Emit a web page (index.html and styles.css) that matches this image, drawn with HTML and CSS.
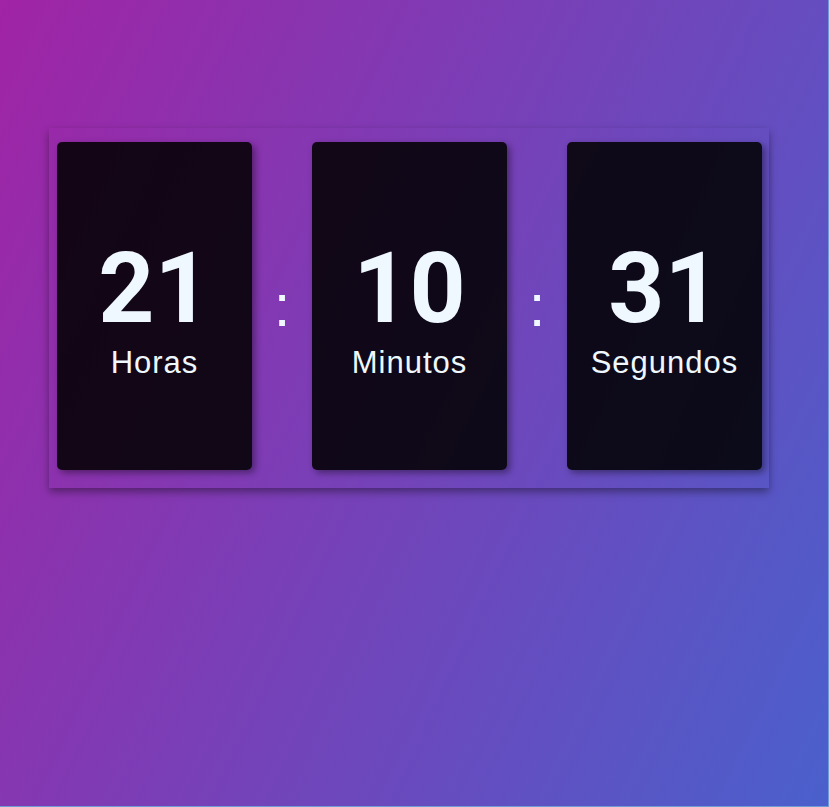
FILE: index.html
```html
<!DOCTYPE html>
<html lang="es">
<head>
<meta charset="utf-8">
<title>Reloj</title>
<link rel="stylesheet" href="styles.css">
</head>
<body>
  <div class="clock">
    <div class="card">
      <span class="num">21</span>
      <span class="label">Horas</span>
    </div>
    <div class="sep">:</div>
    <div class="card">
      <span class="num">10</span>
      <span class="label">Minutos</span>
    </div>
    <div class="sep">:</div>
    <div class="card">
      <span class="num">31</span>
      <span class="label">Segundos</span>
    </div>
  </div>
</body>
</html>
```

FILE: styles.css
```css
html {
  margin: 0;
  background: #6f9ad4;
}

body {
  margin: 0;
  width: calc(100vw - 1px);
  height: calc(100vh - 1px);
  box-sizing: border-box;
  padding: 128px 0 0 49px;
  background: linear-gradient(115deg, #a024a5 0%, #4a60cc 100%);
  font-family: "Liberation Sans", Arial, sans-serif;
  color: #f0f8ff;
  overflow: hidden;
}

.clock {
  display: flex;
  align-items: center;
  width: 720px;
  height: 360px;
  box-sizing: border-box;
  padding: 14px 7px 18px 8px;
  box-shadow: 0 4px 8px rgba(0, 0, 0, 0.38);
}

.card {
  width: 195px;
  height: 328px;
  box-sizing: border-box;
  padding-top: 6px;
  border-radius: 5px;
  background: rgba(0, 0, 0, 0.87);
  box-shadow: 3px 3px 7px rgba(0, 0, 0, 0.4);
  display: flex;
  flex-direction: column;
  align-items: center;
  justify-content: center;
}

.num {
  font-family: Roboto, "Liberation Sans", Arial, sans-serif;
  font-size: 98px;
  font-weight: bold;
  line-height: 1;
}

.label {
  margin-top: 9px;
  font-size: 31px;
  line-height: 1;
  letter-spacing: 1px;
}

.sep {
  width: 60px;
  text-align: center;
  font-size: 60px;
  line-height: 1;
}
```
